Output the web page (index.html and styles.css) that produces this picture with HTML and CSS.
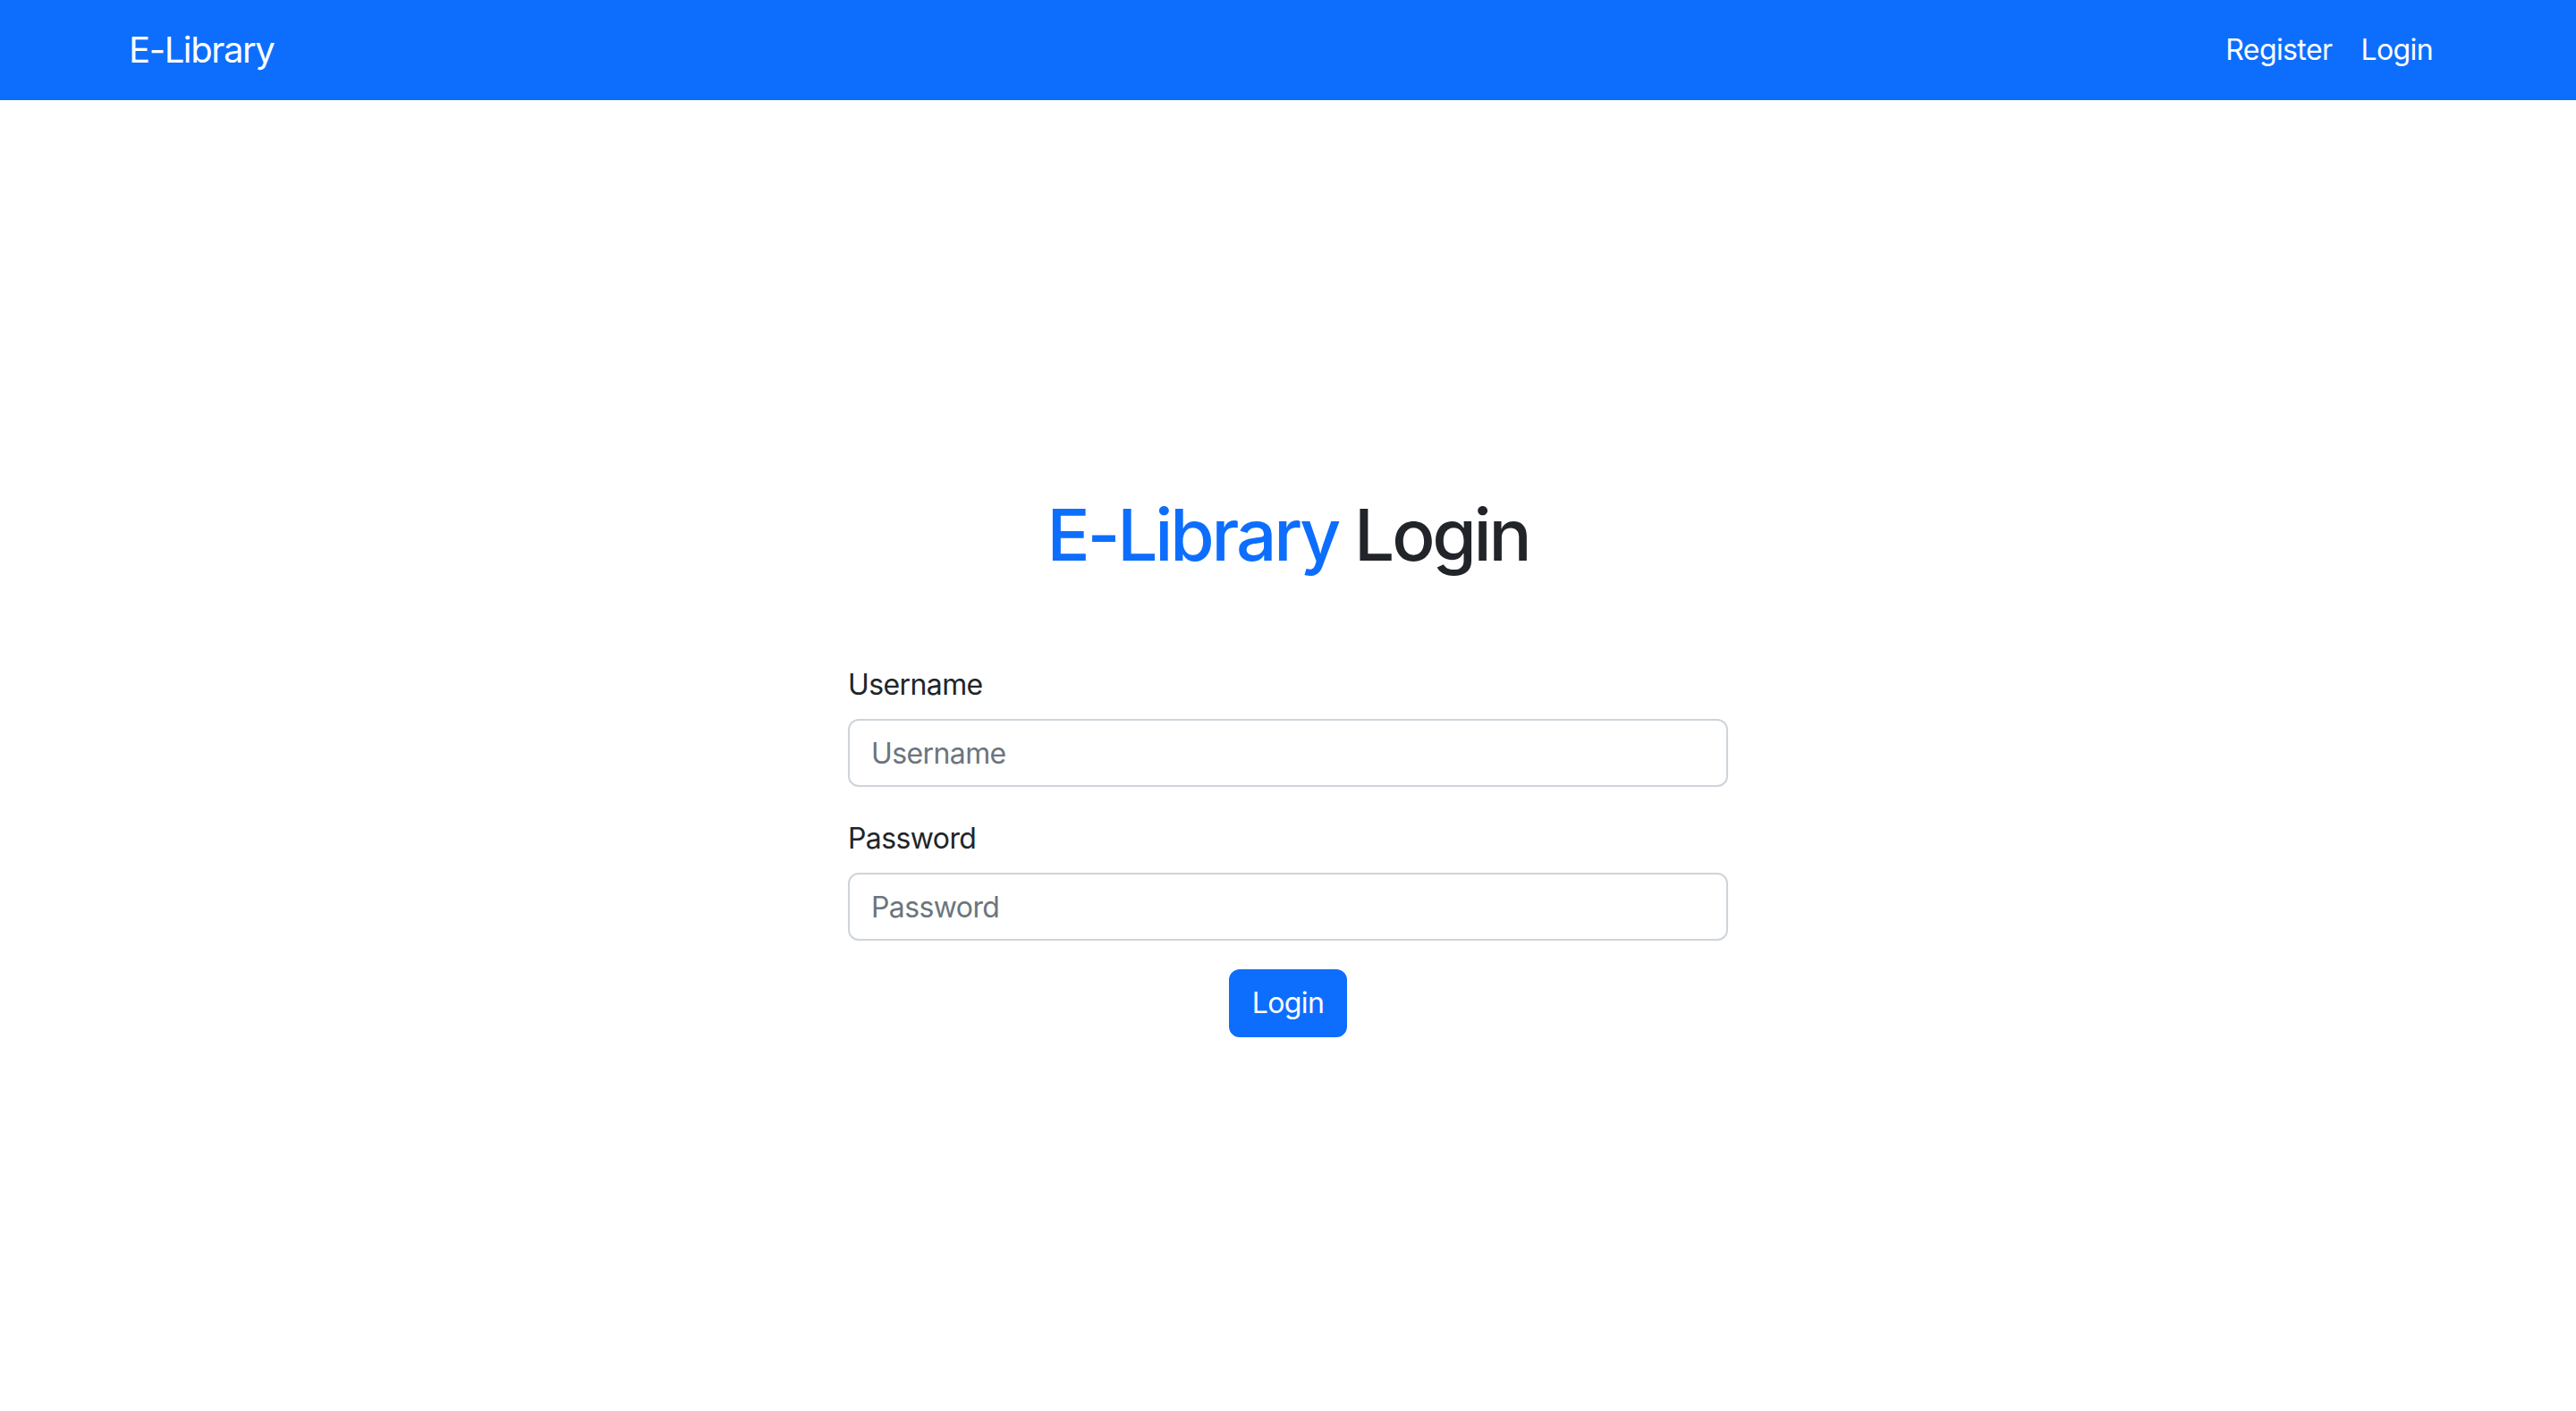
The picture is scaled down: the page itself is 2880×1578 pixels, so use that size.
FILE: index.html
```html
<!DOCTYPE html>
<html lang="en">
<head>
<meta charset="utf-8">
<title>E-Library Login</title>
<link rel="stylesheet" href="styles.css">
</head>
<body>
<nav class="navbar">
  <div class="container nav-inner">
    <a class="brand" href="#">E-Library</a>
    <ul class="nav-links">
      <li><a class="nav-link" href="#">Register</a></li>
      <li><a class="nav-link" href="#">Login</a></li>
    </ul>
  </div>
</nav>
<main class="main">
  <h1 class="title"><span class="title-accent">E-Library</span> Login</h1>
  <form class="login-form">
    <div class="field">
      <label class="label" for="username">Username</label>
      <input class="control" id="username" type="text" placeholder="Username">
    </div>
    <div class="field field-last">
      <label class="label" for="password">Password</label>
      <input class="control" id="password" type="password" placeholder="Password">
    </div>
    <div class="actions">
      <button class="btn" type="submit">Login</button>
    </div>
  </form>
</main>
</body>
</html>
```
FILE: styles.css
```css
* { box-sizing: border-box; }
html, body { margin: 0; padding: 0; }
body {
  font-family: Inter, "Noto Sans", "Liberation Sans", sans-serif;
  font-size: 32px;
  line-height: 1.5;
  letter-spacing: -0.6px;
  color: #212529;
  background: #fff;
  width: 2880px;
  height: 1578px;
  overflow: hidden;
}
.navbar {
  background: #0d6efd;
  padding: 16px 0;
}
.container {
  width: 2640px;
  margin: 0 auto;
  padding: 0 24px;
}
.nav-inner {
  display: flex;
  align-items: center;
  justify-content: space-between;
}
.brand {
  color: #fff;
  text-decoration: none;
  font-size: 40px;
  line-height: 60px;
  padding: 10px 0;
  letter-spacing: -1.4px;
}
.nav-links {
  list-style: none;
  margin: 0;
  padding: 0;
  display: flex;
}
.nav-link {
  display: block;
  color: #fff;
  text-decoration: none;
  padding: 16px;
  line-height: 48px;
  letter-spacing: -0.6px;
}
.main {
  padding-top: 438px;
  display: flex;
  flex-direction: column;
  align-items: center;
}
.title {
  margin: 0 0 96px;
  font-size: 80px;
  line-height: 96px;
  font-weight: 500;
  color: #212529;
  letter-spacing: -3.2px;
}
.title-accent { color: #0d6efd; }
.login-form {
  width: 984px;
}
.field {
  margin-bottom: 34px;
}
.field-last {
  margin-bottom: 32px;
}
.label {
  display: block;
  margin-bottom: 14px;
  line-height: 48px;
}
.control {
  display: block;
  width: 100%;
  height: 76px;
  padding: 12px 24px;
  font: inherit;
  font-size: 32px;
  line-height: 48px;
  letter-spacing: -0.6px;
  color: #212529;
  background: #fff;
  border: 2px solid #ced4da;
  border-radius: 12px;
  outline: none;
}
.control::placeholder { color: #6c757d; opacity: 1; }
.actions {
  display: flex;
  justify-content: center;
}
.btn {
  font: inherit;
  font-size: 32px;
  line-height: 48px;
  letter-spacing: -0.6px;
  color: #fff;
  background: #0d6efd;
  border: 2px solid #0d6efd;
  border-radius: 12px;
  padding: 12px 24px;
  cursor: pointer;
}
```
